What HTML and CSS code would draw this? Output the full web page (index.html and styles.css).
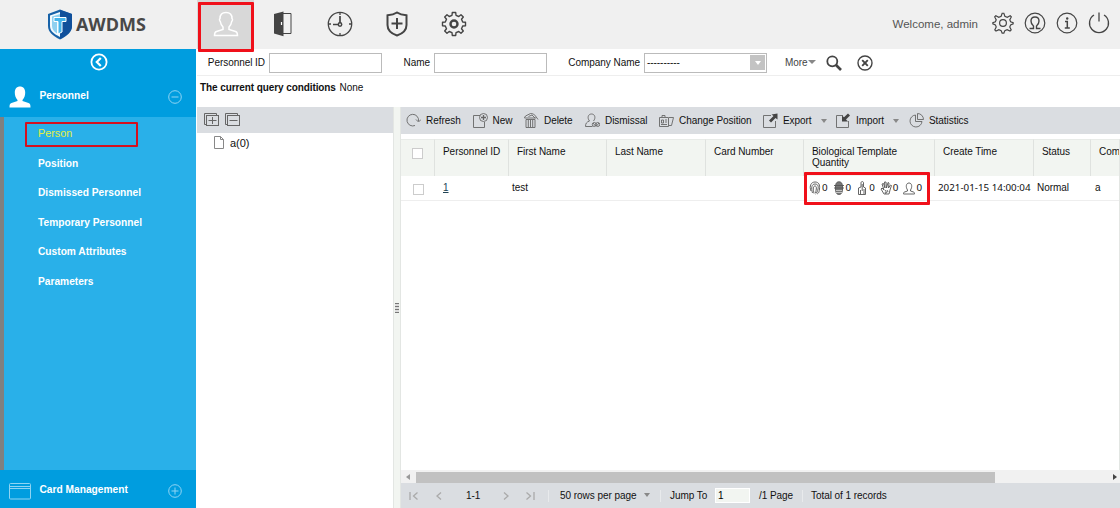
FILE: index.html
```html
<!DOCTYPE html>
<html lang="en">
<head>
  <meta charset="UTF-8">
  <meta name="viewport" content="width=device-width, initial-scale=1.0">
  <title>AWDMS</title>
  <link rel="stylesheet" href="styles.css">
</head>
<body>
  <header class="topbar">
    <div class="logo">
      <svg width="26" height="31" viewBox="0 0 26 31">
        <path d="M13 .5 25 5v12c0 6-5 10-12 13.500C6 27 1 23 1 17V5z" fill="#1762a8"/>
        <path d="M13 3 3 6.500V17c0 5 4 8 10 11z" fill="#f4fafd"/>
        <path d="M13 5 5 7.500V17c0 3 2 6 5 7.500V13H7V9h6z" fill="#8fd0f0"/>
        <path d="M13 1v29c7-3.500 12-7.500 12-13V5z" fill="#10509b"/>
        <path d="M7 8.500h12v4h-4V23l-4 2V12.500H7z" fill="#45b4ea" stroke="#fff" stroke-width="1"/>
      </svg>
      <span>AWDMS</span>
    </div>
    <nav class="modules">
      <a class="module active">
        <svg width="26" height="26" viewBox="0 0 26 26" fill="none" stroke="#fff" stroke-width="1.500">
          <path d="M10 16C8 14 7.500 12 7.300 10.500c-1-1-1-2.500-.3-3C7 3.500 9 1.500 13 1.500s6 2 6 6c.7.5.7 2-.3 3-.2 1.500-.7 3.500-2.700 5.500v2.500l6.500 2c1.500.5 2 1.500 2 4h-23c0-2.500.5-3.500 2-4l6.500-2z"/>
        </svg>
      </a>
      <a class="module">
        <svg width="18" height="26" viewBox="0 0 18 26">
          <path d="M7 2.500h10v20H7" fill="none" stroke="#444"/>
          <path d="M0 3 9.500.5v24.800L0 22.500z" fill="#444"/>
          <path d="M7.500 11v3" stroke="#fff" stroke-width="1.200"/>
        </svg>
      </a>
      <a class="module">
        <svg width="26" height="26" viewBox="0 0 26 26" fill="none" stroke="#444" stroke-width="1.300">
          <circle cx="13" cy="13" r="11.700"/>
          <path d="M13 1v3M13 22v3M1 13h3M22 13h3"/>
          <circle cx="13" cy="13.500" r="1.700" stroke-width="1.500"/>
          <path d="M13 5v7M6 13.500h5" stroke-width="1.700"/>
        </svg>
      </a>
      <a class="module">
        <svg width="24" height="26" viewBox="0 0 24 26" fill="none" stroke="#444" stroke-width="2">
          <path d="M12 1.500c3 2 6 2.500 9.500 2.800V14c0 5-3.500 8.500-9.500 10.500C6 22.500 2.500 19 2.500 14V4.300C6 4 9 3.500 12 1.500z"/>
          <path d="M12 7v11M6.500 12.500h11"/>
        </svg>
      </a>
      <a class="module">
        <svg width="26" height="26" viewBox="0 0 26 26" fill="none" stroke="#444" stroke-width="1.400" stroke-linejoin="round">
          <path d="M11 4.300 11.300 1.500h3.400L15 4.300l2.800 1.200L20 3.700 22.300 6l-1.800 2.200L21.700 11l2.800.3v3.400l-2.800.3-1.200 2.800 1.800 2.200-2.300 2.300-2.200-1.800L15 21.700l-.3 2.800h-3.400L11 21.700l-2.800-1.200L6 22.300 3.700 20l1.800-2.200L4.300 15l-2.800-.3v-3.400l2.800-.3 1.200-2.800L3.700 6 6 3.700l2.200 1.800z"/>
          <circle cx="13" cy="13" r="3.500" stroke-width="2.400"/>
        </svg>
      </a>
    </nav>
    <div class="account">
      <span class="welcome">Welcome, admin</span>
      <svg width="22" height="22" viewBox="0 0 26 26" fill="none" stroke="#444" stroke-width="1.400">
        <path d="M10.800 5 12 1.500h2L15.200 5l2.800 1.200 3.500-1.700 1.300 1.300L21 9.300l1 2.200 3 1v1.500l-3 1.200-1 2.500 1.700 3.500-1.400 1.400-3.500-1.700-2.600 1.100L14 25h-2l-1.200-3-2.600-1.100-3.500 1.700-1.400-1.400L5 17.700l-1-2.500L1 14v-1.500l3-1 1-2.200-1.800-3.500 1.300-1.300L8 6.200z"/>
        <circle cx="13" cy="13" r="4"/>
      </svg>
      <svg width="22" height="22" viewBox="0 0 22 22" fill="none" stroke="#444" stroke-width="1.200">
        <circle cx="11" cy="11" r="9.800"/>
        <path d="M5.500 16.500h4V14C7.500 12.500 7 10.500 7 9c0-2.500 1.500-4 4-4s4 1.500 4 4c0 1.500-.5 3.500-2.500 5v2.500h4" stroke-width="1.400"/>
      </svg>
      <svg width="22" height="22" viewBox="0 0 22 22" fill="none" stroke="#444" stroke-width="1.200">
        <circle cx="11" cy="11" r="9.800"/>
        <path d="M9 9.500h2.300V16M8.800 16h5" stroke-width="1.500"/>
        <circle cx="11.200" cy="6.500" r="1.200" fill="#444" stroke="none"/>
      </svg>
      <svg width="22" height="22" viewBox="0 0 22 22" fill="none" stroke="#444" stroke-width="1.300">
        <path d="M6 3a9.500 9.500 0 1 0 10 0M11 .5v9"/>
      </svg>
    </div>
  </header>

  <div class="content">
    <aside class="sidebar">
      <div class="collapse">
        <svg width="18" height="18" viewBox="0 0 18 18" fill="none" stroke="#fff" stroke-width="1.800">
          <circle cx="9" cy="9" r="7.600"/>
          <path d="M10.800 5 6.800 9l4 4" stroke-width="2.200"/>
        </svg>
      </div>
      <div class="group">
        <svg width="22" height="22" viewBox="0 0 22 22" fill="#fff">
          <path d="M8.500 14C6.500 12 5.800 9 5.800 6.500 5.800 2.500 8 .5 11 .5s5.200 2 5.200 6c0 2.500-.7 5.500-2.700 7.500v1l6 2c1.500.5 2 1.500 2 4.500H.5c0-3 .5-4 2-4.500l6-2z"/>
        </svg>
        <span>Personnel</span>
        <svg class="toggle" width="14" height="14" viewBox="0 0 14 14">
          <circle cx="7" cy="7" r="6.300"/><path d="M3.500 7h7"/>
        </svg>
      </div>
      <ul class="submenu">
        <li class="selected">Person</li>
        <li>Position</li>
        <li>Dismissed Personnel</li>
        <li>Temporary Personnel</li>
        <li>Custom Attributes</li>
        <li>Parameters</li>
      </ul>
      <div class="group bottom">
        <svg width="22" height="17" viewBox="0 0 22 17" fill="none" stroke="#8fd4f3">
          <rect x=".5" y=".5" width="21" height="15.500" rx="1"/><path d="M1 3.500h20M1 5.500h20"/>
        </svg>
        <span>Card Management</span>
        <svg class="toggle" width="14" height="14" viewBox="0 0 14 14">
          <circle cx="7" cy="7" r="6.300"/><path d="M3.500 7h7M7 3.500v7"/>
        </svg>
      </div>
    </aside>

    <main class="main">
      <form class="search">
        <label class="l-id">Personnel ID</label>
        <input type="text">
        <label class="l-name">Name</label>
        <input type="text">
        <label class="l-company">Company Name</label>
        <div class="select"><span>----------</span><i></i></div>
        <span class="more">More<i class="caret"></i></span>
        <svg class="find" width="16" height="16" viewBox="0 0 16 16" fill="none" stroke="#444" stroke-width="1.800">
          <circle cx="6.300" cy="6.300" r="5"/><path d="m10 10 5 5" stroke-width="2.600"/>
        </svg>
        <svg width="16" height="16" viewBox="0 0 16 16" fill="none" stroke="#444" stroke-width="1.400">
          <circle cx="8" cy="8" r="7"/><path d="m5.200 5.200 5.600 5.600M10.800 5.200l-5.600 5.600" stroke-width="1.900"/>
        </svg>
      </form>
      <div class="conditions"><b>The current query conditions</b> None</div>

      <div class="panels">
        <section class="tree">
          <div class="tree-bar">
            <svg width="15" height="14" viewBox="0 0 15 14" fill="none" stroke="#666">
              <path d="M2.500 11.500h-2v-11h12v2"/><rect x="2.500" y="2.500" width="12" height="10"/><path d="M4.500 7.500h8M8.500 4v7"/>
            </svg>
            <svg width="15" height="14" viewBox="0 0 15 14" fill="none" stroke="#666">
              <path d="M2.500 11.500h-2v-11h12v2"/><rect x="2.500" y="2.500" width="12" height="10"/><path d="M4.500 7.500h8"/>
            </svg>
          </div>
          <div class="tree-node">
            <svg width="10" height="13" viewBox="0 0 10 13" fill="#fff" stroke="#888">
              <path d="M.5.5h6l3 3v9h-9zM6.500.5v3h3"/>
            </svg>
            <span>a(0)</span>
          </div>
        </section>
        <div class="splitter"><i></i></div>

        <section class="list">
          <div class="tools">
            <a>
              <svg viewBox="0 0 15 15"><path d="M9 12.500A5.800 5.800 0 1 1 12.500 8M10 6.500l2.500 2.500L15 6.500"/></svg>
              Refresh
            </a>
            <a>
              <svg viewBox="0 0 15 15"><path d="M7 2.500H.5v12h11V9"/><circle cx="10.500" cy="4.500" r="4"/><path d="M8 4.500h5M10.500 2v5" stroke-width="1.300"/></svg>
              New
            </a>
            <a>
              <svg viewBox="0 0 15 15"><path d="M2 6.500h9v8H2zM0 5.500 1.500 3l5-2.500 3 .5 2 2 2.500 3.500M4.500 3.500 8 2l3 3M4.300 7v7M6.500 7v7M8.700 7v7M1 5h11"/></svg>
              Delete
            </a>
            <a>
              <svg viewBox="0 0 15 15"><path d="M4.500 8C2 5 3 1 6.500 1s4.500 4 2 7M4.500 8C1.500 9 .5 10.500.5 13.500h7"/><circle cx="9.300" cy="11.500" r="2"/><circle cx="12.700" cy="11.500" r="2"/><path d="m8 10 2.500 3m3.500-3-2.500 3"/></svg>
              Dismissal
            </a>
            <a>
              <svg viewBox="0 0 15 15"><path d="M.5 4.500h9v9h-9zM3 4V2.500h3V4M2.500 7h2v3h-2zM6 7h2M6 9h2M2 11.500h6M10 4.500h4.500l-2 8H10"/></svg>
              Change Position
            </a>
            <a>
              <svg viewBox="0 0 15 15"><path d="M8 2.500H.5v12h12V8"/><path class="solid" d="M14.500.5v6L12.500 5 8 9.500 6 7.500 10.500 3 8.500 1.500z"/></svg>
              Export<i class="caret"></i>
            </a>
            <a>
              <svg viewBox="0 0 15 15"><path d="M7 2.500H.5v12h12V8"/><path class="solid" d="M6 8.500V2.500l2 1.700L12 .5l2 2-4 4 2 2z"/></svg>
              Import<i class="caret"></i>
            </a>
            <a>
              <svg viewBox="0 0 15 15"><path d="M6.500 2a6 6 0 1 0 6.500 6.500H6.500z"/><path d="M8.500.5a6 6 0 0 1 6 6h-6z"/></svg>
              Statistics
            </a>
          </div>

          <div class="grid-wrap">
            <table>
              <colgroup>
                <col class="c-check"><col class="c-id"><col class="c-first"><col class="c-last"><col class="c-card">
                <col class="c-bio"><col class="c-time"><col class="c-status"><col>
              </colgroup>
              <thead>
                <tr>
                  <th><i class="check"></i></th>
                  <th>Personnel ID</th>
                  <th>First Name</th>
                  <th>Last Name</th>
                  <th>Card Number</th>
                  <th>Biological Template<br>Quantity</th>
                  <th>Create Time</th>
                  <th>Status</th>
                  <th>Com</th>
                </tr>
              </thead>
              <tbody>
                <tr>
                  <td><i class="check"></i></td>
                  <td class="id"><a>1</a></td>
                  <td>test</td>
                  <td></td>
                  <td></td>
                  <td>
                    <div class="bio">
                      <span><svg viewBox="0 0 12 14"><path d="M2 10C0 5 2 1 6 1s5 3 4.500 7-1 4-2.500 5M3.500 12C2 7 2.500 3 6 3s3.500 3 3 5-1 4-2.500 5M5 12.500C4 8 4 5 6 5s1.500 3 .5 7"/></svg>0</span>
                      <span><svg viewBox="0 0 12 14"><path class="fill" d="M2.500 6C2.500 2 4 .8 6 .8S9.500 2 9.500 6v2c0 4-1.500 5.500-3.500 5.500S2.500 12 2.500 8z"/><path d="M1 4.500h10M1 7h10" /><path class="light" d="M3 9.500h6M3 11.500h6"/></svg>0</span>
                      <span><svg viewBox="0 0 12 14"><path d="M5 6V2c0-2 2.500-2 2.500 0v4M5 6 2.500 7v6.500h7V7l-2-1M6.200 3v7M4.500 9v4M8 8v5"/></svg>0</span>
                      <span><svg viewBox="0 0 12 14"><path d="M4 13 1 8l1-1 2 2-2-6 1.500-.5L5 7l-.5-6H6l.5 6L8 1.500l1 .5-.5 5L10.500 4l1 .5L10 9l-1 4zM5 9l2 3M7 9l1 2M5 11l1 2"/></svg>0</span>
                      <span><svg viewBox="0 0 12 14"><path d="M4.500 9C2.500 6 3 2 6 2s3.500 4 1.500 7v1l3 1c1 .3 1 1 1 2H.5c0-1 0-1.700 1-2l3-1z"/></svg>0</span>
                    </div>
                  </td>
                  <td class="time">2021-01-15 14:00:04</td>
                  <td>Normal</td>
                  <td>a</td>
                </tr>
              </tbody>
            </table>
          </div>

          <div class="scrollbar">
            <i class="arrow left"></i>
            <div class="track"><div class="thumb"></div></div>
            <i class="arrow right"></i>
          </div>

          <div class="pager">
            <svg width="10" height="10" viewBox="0 0 10 10"><path d="M1 1v8M8.500 1.500 4.500 5l4 3.500"/></svg>
            <svg class="prev" width="6" height="10" viewBox="0 0 6 10"><path d="M5 1.500 1 5l4 3.500"/></svg>
            <span class="range">1-1</span>
            <svg class="next" width="6" height="10" viewBox="0 0 6 10"><path d="m1 1.500 4 3.500-4 3.500"/></svg>
            <svg class="last" width="10" height="10" viewBox="0 0 10 10"><path d="m1.500 1.500 4 3.500-4 3.500M9 1v8"/></svg>
            <span class="rows">50 rows per page<i class="caret"></i></span>
            <span class="jump">Jump To</span>
            <input type="text" value="1">
            <span class="pages">/1 Page</span>
            <span class="total">Total of 1 records</span>
          </div>
        </section>
      </div>
    </main>
  </div>

  <div class="mark mark-module"></div>
  <div class="mark mark-menu"></div>
  <div class="mark mark-bio"></div>
</body>
</html>
```
FILE: styles.css
```css
* {
  box-sizing: border-box;
}
body {
  margin: 0;
  width: 1120px;
  height: 508px;
  overflow: hidden;
  position: relative;
  display: flex;
  flex-direction: column;
  font-family: "Liberation Sans", Arial, sans-serif;
  font-size: 10px;
  letter-spacing: -0.05px;
  line-height: 12px;
  color: #111;
  background: #fff;
}
svg {
  display: block;
  flex: none;
}

/* top bar */
.topbar {
  display: flex;
  align-items: center;
  height: 49px;
  flex: none;
  background: #f0f0f0;
}
.logo {
  display: flex;
  align-items: center;
  width: 197px;
  padding: 0 0 1px 47px;
  gap: 3px;
  font: bold 18px/30px "Open Sans", sans-serif;
  color: #484848;
}
.modules {
  display: flex;
  height: 49px;
}
.module {
  width: 57px;
  display: flex;
  align-items: center;
  justify-content: center;
  padding: 0 0 2px 0;
}
.module.active {
  background: #d8d8d8;
}
.account {
  display: flex;
  align-items: center;
  gap: 10px;
  margin-left: auto;
  padding: 0 10px 3px 0;
}
.welcome {
  font-size: 11.5px;
  letter-spacing: 0;
  color: #555;
  margin: 2px 4px 0 0;
}

.content {
  display: flex;
  flex: 1;
  min-height: 0;
}

/* sidebar */
.sidebar {
  display: flex;
  flex-direction: column;
  width: 196px;
  flex: none;
  background: #009ddf;
  color: #fff;
}
.collapse {
  display: flex;
  justify-content: center;
  height: 26px;
  padding-top: 4px;
  padding-left: 1px;
}
.group {
  display: flex;
  align-items: center;
  height: 42px;
  padding: 2px 14px 0 9px;
  font-size: 10.2px;
  letter-spacing: 0;
  font-weight: bold;
}
.group span {
  margin: -3px 0 0 8.5px;
}
.group.bottom {
  height: 38px;
  padding-top: 4px;
}
.toggle {
  margin-left: auto;
  fill: none;
  stroke: #8fd4f3;
}
.submenu {
  flex: 1;
  margin: 0;
  padding: 2px 0 0 34px;
  list-style: none;
  border-left: 4px solid #808080;
  background: #29b0e9;
  font-size: 10.2px;
  letter-spacing: 0;
  font-weight: bold;
}
.submenu li {
  height: 29.6px;
  line-height: 29px;
}
.submenu .selected {
  font-size: 10.8px;
  font-weight: normal;
  color: #e6ee3c;
}

/* search */
.main {
  display: flex;
  flex-direction: column;
  flex: 1;
  min-width: 0;
  padding-left: 1px;
}
.search {
  display: flex;
  align-items: center;
  height: 27px;
  padding-top: 1px;
  border-bottom: 1px solid #eee;
}
.search label {
  text-align: right;
  padding-right: 4px;
}
.l-id {
  width: 72px;
}
.l-name {
  width: 52px;
}
.l-company {
  width: 97px;
}
.search input,
.select {
  width: 113px;
  height: 20px;
  padding: 0;
  border: 1px solid #bbb;
  background: #fff;
}
.select {
  display: flex;
  align-items: center;
  justify-content: space-between;
  width: 123px;
  padding: 0 1px 0 2px;
}
.select i {
  display: flex;
  align-items: center;
  justify-content: center;
  width: 15px;
  height: 15px;
  background: #c3c3c3;
}
.select i::after {
  content: "";
  border: 3px solid transparent;
  border-top: 4px solid #fff;
  border-bottom: 0;
}
.caret {
  display: inline-block;
  border: 3.5px solid transparent;
  border-top: 4px solid #888;
  border-bottom: 0;
}
.more {
  margin-left: 18px;
  color: #444;
}
.more .caret {
  margin-bottom: 2px;
  border-left-width: 4px;
  border-right-width: 4px;
}
.find {
  margin: 0 15px 0 10px;
}
.conditions {
  height: 31px;
  padding: 6px 0 0 3px;
}
.conditions b {
  letter-spacing: -0.09px;
  margin-right: 1px;
}

/* tree */
.panels {
  display: flex;
  flex: 1;
  min-height: 0;
}
.tree {
  width: 196px;
}
.tree-bar {
  display: flex;
  align-items: center;
  gap: 6px;
  height: 26px;
  padding: 0 0 1px 7px;
  background: #dadde1;
}
.tree-node {
  display: flex;
  align-items: center;
  gap: 6px;
  padding: 3px 0 0 17px;
  font-size: 11px;
}
.splitter {
  width: 8px;
  flex: none;
  border: 1px solid #e3e6e3;
  border-width: 0 1px;
  background: #f2f5f1;
  display: flex;
  align-items: center;
}
.splitter i {
  width: 4px;
  height: 10px;
  margin-left: 1px;
  background: repeating-linear-gradient(#777 0 1px, #ddd 1px 3px);
}

/* list */
.list {
  display: flex;
  flex-direction: column;
  flex: 1;
  min-width: 0;
}
.tools {
  display: grid;
  grid-template-columns: 66.5px 51.5px 61px 74px 104px 73px 73px auto;
  align-items: center;
  height: 27px;
  flex: none;
  padding-left: 5px;
  background: #dadde1;
}
.tools a {
  display: flex;
  align-items: center;
  gap: 5px;
}
.tools svg {
  width: 15px;
  height: 15px;
  fill: none;
  stroke: #666;
  stroke-width: 0.9;
}
.tools .solid {
  fill: #444;
  stroke: none;
}
.tools .caret {
  margin-left: 4px;
}
.grid-wrap {
  flex: 1;
  margin-top: 5px;
  overflow: hidden;
  border-right: 1px solid #e3e6e3;
}
table {
  width: 718px;
  table-layout: fixed;
  border-collapse: separate;
  border-spacing: 0;
}
.c-check { width: 34px; }
.c-id { width: 74px; }
.c-first { width: 98px; }
.c-last { width: 99px; }
.c-card { width: 98px; }
.c-bio { width: 131px; }
.c-time { width: 99px; }
.c-status { width: 57px; }
th {
  height: 37px;
  padding: 6px 0 0 8px;
  text-align: left;
  vertical-align: top;
  font-weight: normal;
  line-height: 11px;
  white-space: nowrap;
  background: #f2f5f1;
  border-right: 1px solid #dfe2df;
  border-top: 1px solid #e8ebe8;
}
th:last-child {
  border-right: 0;
}
td {
  height: 25px;
  padding: 0 0 0 3px;
  white-space: nowrap;
  border-bottom: 1px solid #eee;
}
th:first-child,
td:first-child {
  padding-left: 11px;
}
.check {
  display: block;
  width: 11px;
  height: 11px;
  border: 1px solid #ccc;
  background: #fff;
}
th .check {
  margin-top: 2px;
}
td:first-child .check {
  margin: 2px 0 0 1px;
}
td.id {
  padding-left: 8px;
}
.id a {
  color: #245;
  text-decoration: underline;
}
td:last-child {
  padding-left: 4px;
}
.time,
.bio {
  font-family: "Noto Sans", sans-serif;
  font-size: 9.8px;
  letter-spacing: 0;
}
.bio {
  display: flex;
  gap: 5px;
  padding-left: 2px;
}
.bio span {
  display: flex;
  align-items: center;
  gap: 1px;
}
.bio svg {
  width: 12px;
  height: 14px;
  fill: none;
  stroke: #555;
  stroke-width: 0.9;
}
.bio .fill {
  fill: #777;
}
.bio .light {
  stroke: #ccc;
}

/* scrollbar and pager */
.scrollbar {
  display: flex;
  align-items: center;
  height: 13px;
  flex: none;
  padding: 1px 3px 0 5px;
  background: #f1f1f1;
}
.track {
  flex: 1;
  margin: 0 5px 0 6px;
}
.thumb {
  width: 579px;
  height: 11px;
  background: #c1c1c1;
}
.arrow {
  border: 3px solid transparent;
}
.arrow.left {
  border-left: 0;
  border-right: 4px solid #999;
}
.arrow.right {
  border-right: 0;
  border-left: 4px solid #444;
}
.pager {
  display: flex;
  align-items: center;
  height: 25px;
  flex: none;
  padding-left: 8px;
  background: #dadde1;
}
.pager svg {
  fill: none;
  stroke: #aaa;
  stroke-width: 1.3;
}
.prev {
  margin-left: 17px;
}
.range {
  width: 59px;
  padding-left: 24px;
}
.next {
  margin-left: 2px;
}
.last {
  margin-left: 16px;
}
.rows,
.total {
  border-left: 1px solid #e8eaec;
  padding-left: 11px;
}
.rows {
  margin-left: 13px;
  width: 113px;
  border-right: 1px solid #e8eaec;
}
.rows .caret {
  margin: 0 0 2px 8px;
}
.jump {
  margin-left: 9px;
  width: 45px;
}
.pager input {
  width: 35px;
  height: 15px;
  padding: 0 2px;
  border: 1px solid #fff;
  background: #f2f5f1;
  font: inherit;
}
.pages {
  margin-left: 9px;
  width: 43px;
}
.total {
  padding-left: 8px;
}

/* highlight frames */
.mark {
  position: absolute;
  border: 3px solid #f0101a;
  border-radius: 1px;
}
.mark-module {
  left: 198px;
  top: 2px;
  width: 56px;
  height: 50px;
}
.mark-menu {
  left: 25px;
  top: 122px;
  width: 113px;
  height: 25px;
  border-width: 2px;
  border-color: #d4101f;
}
.mark-bio {
  left: 804px;
  top: 172px;
  width: 126px;
  height: 33px;
}
```
